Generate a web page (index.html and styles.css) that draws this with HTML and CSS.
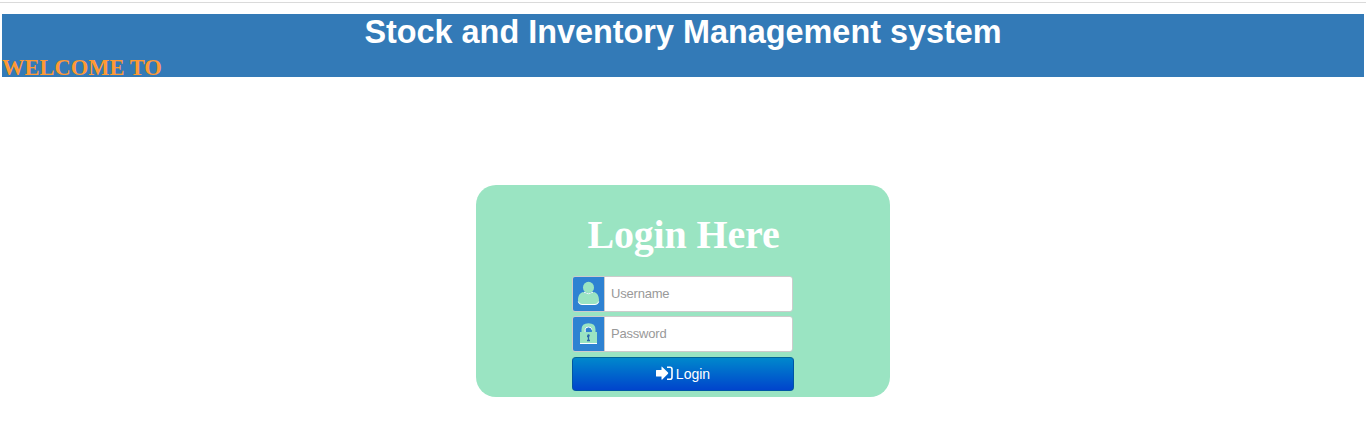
FILE: index.html
```html
<!DOCTYPE html>
<html lang="en">
<head>
<meta charset="utf-8">
<title>Stock and Inventory Management system</title>
<link rel="stylesheet" href="styles.css">
</head>
<body>
<header class="banner">
  <h1 class="title">Stock and Inventory Management system</h1>
  <div class="welcome"><span>WELCOME TO</span></div>
</header>
<main class="panel">
  <h2 class="heading">Login Here</h2>
  <form class="form">
    <div class="field">
      <span class="addon"><svg width="31" height="34" viewBox="0 0 31 34"><path d="M10 15C6.500 16 5 19.500 5 23Q5 27.500 9 27.500H22Q26 27.500 26 23C26 19.500 24.500 16 21 15Q15.500 18 10 15Z" fill="#9ae4c2"/><path d="M5.300 24.500Q5.800 27.500 9 27.500H22Q25.200 27.500 25.700 24.500M11 15.200Q15.500 18.200 20 15.200" fill="none" stroke="#fff"/><ellipse cx="15.500" cy="10.500" rx="5.500" ry="5.700" fill="#9ae4c2"/></svg></span>
      <input class="input" type="text" placeholder="Username">
    </div>
    <div class="field">
      <span class="addon"><svg width="31" height="34" viewBox="0 0 31 34"><path d="M10.300 16V12.500Q10.300 8 15.500 8Q20.700 8 20.700 12.500V16" fill="none" stroke="#9ae4c2" stroke-width="3.600"/><path d="M7 15H24V26.500H7Z" fill="#9ae4c2"/><path d="M7 26.500H24M12.200 15V12.700Q12.200 10 15.500 10Q18.800 10 18.800 12.700" fill="none" stroke="#fff"/><path d="M15.500 19V23M14 19.500H15.500M14 23.500H17" stroke="#2a68ac" stroke-width="1.300"/><circle cx="15.500" cy="18.500" r="1.200" fill="#2a68ac"/></svg></span>
      <input class="input" type="password" placeholder="Password">
    </div>
    <button class="login" type="button"><svg class="login-icon" width="17" height="15" viewBox="0 0 17 15"><path d="M0 4.500Q0 4 .5 4H5.500V1.200Q5.500 .2 6.300 .9L12 6.600Q12.500 7.200 12 7.800L6.300 13.400Q5.500 14 5.500 13V10.500H.5Q0 10.500 0 10Z" fill="#fff"/><path d="M11 1.200H14Q16 1.200 16 3.200V11.300Q16 13.300 14 13.300H11" fill="none" stroke="#fff" stroke-width="1.600"/></svg><span>Login</span></button>
  </form>
</main>
</body>
</html>
```
FILE: styles.css
```css
* { box-sizing: border-box; }
body { margin: 0; padding-top: 2px; background: #fff; font-family: "Liberation Sans", Arial, sans-serif; }
.banner { border-top: 1px solid #dadada; padding: 11px 2px 0; }
.title { margin: 0; height: 36px; background: #337ab7; color: #fff; font-size: 32.4px; line-height: 36px; text-align: center; }
.welcome { height: 27px; background: #337ab7; color: #ff9933; font: bold 22.5px/27px "Liberation Serif", "Times New Roman", serif; padding-top: 4px; }
.welcome span { display: block; line-height: 27px; height: 23px; }
.panel { width: 414px; height: 212px; margin: 108px auto 0; border-radius: 20px; background: #9ae4c2; padding-top: 26px; }
.heading { margin: 0; height: 48px; color: #fff; font: bold 40px/48px "Liberation Serif", "Times New Roman", serif; letter-spacing: -0.15px; text-align: center; text-indent: 1px; }
.form { width: 222px; margin: 17px auto 0; }
.field { display: flex; width: 221px; height: 36px; margin-bottom: 4px; border: 1px solid #ccc; border-radius: 3px; overflow: hidden; }
.addon { width: 31px; height: 34px; background: #2e82d2; }
.addon svg { display: block; }
.input { flex: 1; min-width: 0; border: 0; border-left: 1px solid #ccc; padding: 0 6px 2px; background: #fff; font: 13px "Liberation Sans", Arial, sans-serif; letter-spacing: -0.2px; outline: 0; }
.input::placeholder { color: #999; opacity: 1; }
.login { display: flex; align-items: center; justify-content: center; gap: 3px; width: 222px; height: 34px; margin-top: 5px; padding: 0; border: 1px solid #0055a5; border-top-color: #006699; border-radius: 4px; background: linear-gradient(#0088cc, #0044cc); color: #fff; font: 14px "Liberation Sans", Arial, sans-serif; }
.login-icon { margin-bottom: 2px; }
```
